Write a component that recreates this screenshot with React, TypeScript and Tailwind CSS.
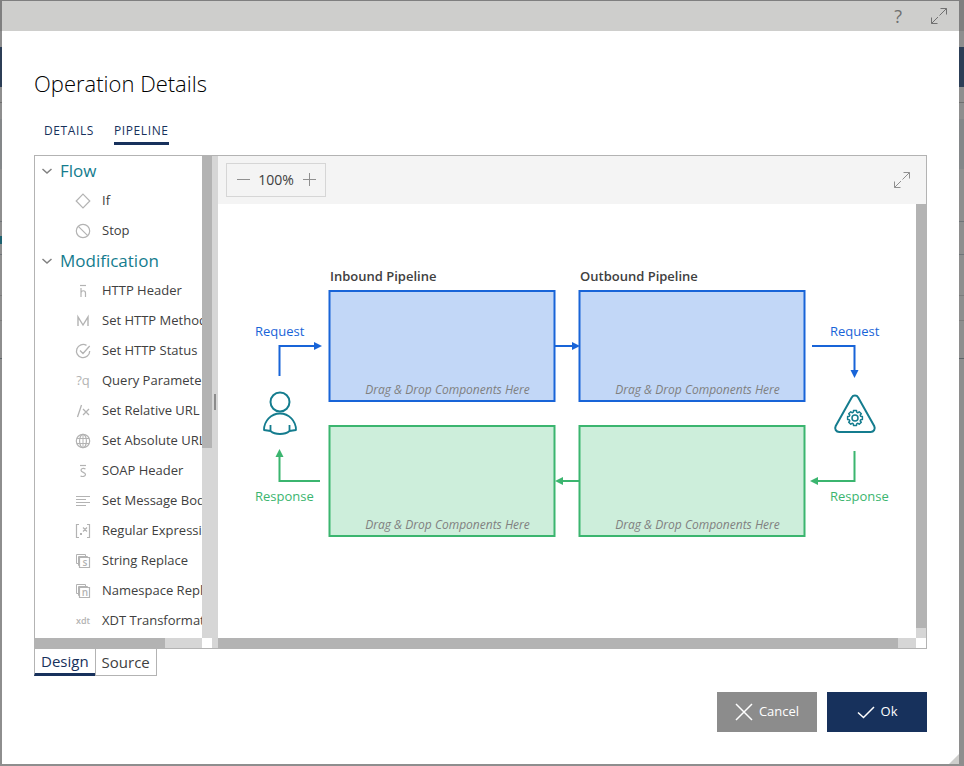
import type { ReactNode } from 'react';
import { useState } from 'react';

type TreeItem = { label: string; icon: ReactNode };
type TreeGroup = { label: string; items: TreeItem[] };

function Glyph({ children }: { children: ReactNode }) {
  return (
    <svg
      width="16"
      height="16"
      viewBox="0 0 16 16"
      fill="none"
      stroke="#b3b3b3"
      aria-hidden="true"
      className="shrink-0"
    >
      {children}
    </svg>
  );
}

function Letters({
  children,
  size = 13,
  y = 12,
  x = 8,
  weight = 400,
}: {
  children: string;
  size?: number;
  y?: number;
  x?: number;
  weight?: number;
}) {
  return (
    <text
      x={x}
      y={y}
      textAnchor="middle"
      fontSize={size}
      fontWeight={weight}
      fill="#b3b3b3"
      stroke="none"
    >
      {children}
    </text>
  );
}

const stacked = (letter: string) => (
  <Glyph>
    <path d="M3.5 10.500h-2v-9h9v2" />
    <path d="M4 12.5h-.5v-9h9V4" />
    <path d="M4.500 4.500h10v10h-10z" strokeWidth="1.2" />
    <Letters size={10} x={10} y={13} weight={600}>
      {letter}
    </Letters>
  </Glyph>
);

const groups: TreeGroup[] = [
  {
    label: 'Flow',
    items: [
      {
        label: 'If',
        icon: (
          <Glyph>
            <path d="M8 1.2 14.8 8 8 14.8 1.2 8z" strokeWidth="1.2" />
          </Glyph>
        ),
      },
      {
        label: 'Stop',
        icon: (
          <Glyph>
            <circle cx="8" cy="8" r="6.7" strokeWidth="1.2" />
            <path d="m3.3 3.3 9.4 9.4" strokeWidth="1.2" />
          </Glyph>
        ),
      },
    ],
  },
  {
    label: 'Modification',
    items: [
      {
        label: 'HTTP Header',
        icon: (
          <Glyph>
            <path d="M5 2.5h6" strokeWidth="1.2" />
            <path d="M6 5v9M6 10c0-3 4.500-3 4.500 0v4" strokeWidth="1.2" />
          </Glyph>
        ),
      },
      {
        label: 'Set HTTP Method',
        icon: (
          <Glyph>
            <path d="M3 13V4l5 8 5-8v9" strokeWidth="1.4" />
          </Glyph>
        ),
      },
      {
        label: 'Set HTTP Status',
        icon: (
          <Glyph>
            <path
              d="M11.5 2.4A6.600 6.600 0 1 0 14.700 8M5 7.500l3 3L14.700 3"
              strokeWidth="1.300"
            />
          </Glyph>
        ),
      },
      {
        label: 'Query Parameters',
        icon: (
          <Glyph>
            <Letters>?q</Letters>
          </Glyph>
        ),
      },
      {
        label: 'Set Relative URL',
        icon: (
          <Glyph>
            <path d="m6.5 2-4 12M8 6l6 6M14 6l-6 6" strokeWidth="1.3" />
          </Glyph>
        ),
      },
      {
        label: 'Set Absolute URL',
        icon: (
          <Glyph>
            <circle cx="8" cy="8" r="6.7" strokeWidth="1.2" />
            <ellipse cx="8" cy="8" rx="3.4" ry="6.7" strokeWidth="1.2" />
            <path d="M8 1.5v13M2 5.5h12M2 10.5h12" />
          </Glyph>
        ),
      },
      {
        label: 'SOAP Header',
        icon: (
          <Glyph>
            <path d="M5 2.5h6" strokeWidth="1.2" />
            <path
              d="M10.5 6C8.5 5 6 5.3 6 7.300c0 2.400 4.500 1.800 4.500 4.200 0 2-3 2.500-5 1.500"
              strokeWidth="1.2"
            />
          </Glyph>
        ),
      },
      {
        label: 'Set Message Body',
        icon: (
          <Glyph>
            <path d="M1 3.5h14M1 6.5h10M1 9.5h14M1 12.5h10" />
          </Glyph>
        ),
      },
      {
        label: 'Regular Expression',
        icon: (
          <Glyph>
            <path d="M4 1.5H1.5v13H4M12 1.5h2.5v13H12M8 4.5l4 4M12 4.5l-4 4" strokeWidth="1.2" />
            <path d="M5 11h2" strokeWidth="2" />
          </Glyph>
        ),
      },
      { label: 'String Replace', icon: stacked('s') },
      { label: 'Namespace Replace', icon: stacked('n') },
      {
        label: 'XDT Transformation',
        icon: (
          <Glyph>
            <Letters size={9} y={11} weight={600}>
              xdt
            </Letters>
          </Glyph>
        ),
      },
    ],
  },
];

function ExpandIcon({ color }: { color: string }) {
  return (
    <svg width="18" height="18" viewBox="0 0 18 18" fill="none" stroke={color}>
      <path d="M10.5 1.5h6v6M16.5 1.5l-7 7M1.5 10.5v6h6M1.5 16.5 8 10" />
    </svg>
  );
}

// The dimmed page that shows around the edges of the dialog
function Backdrop() {
  return (
    <div
      aria-hidden="true"
      className="col-start-1 row-start-1 flex flex-col bg-[#8e8e8e]"
    >
      <div className="h-[31px] bg-[#7f7f7f]" />
      <div className="h-4" />
      <div className="h-10 bg-[#2c3e56]" />
      <div className="h-4 border-b border-[#6f6f6f]" />
      <div className="h-4" />
      <div className="h-[50px] bg-[#848789]" />
      <div className="h-[53px] border-b border-[#6f7478]" />
      <div className="h-3.5" />
      <div className="h-2 w-0.5 bg-[#1d6170]" />
      <div className="h-[11px] border-b border-[#6f7478]" />
      <div className="h-[41px] border-b border-[#7c7c7c]" />
      <div className="h-[25px] border-b border-[#7c7c7c]" />
      <div className="h-[38px] border-b border-[#5c6468]" />
    </div>
  );
}

function ComponentTree() {
  const [closed, setClosed] = useState<string[]>([]);

  const toggle = (label: string) => {
    setClosed((prev) =>
      prev.includes(label) ? prev.filter((l) => l !== label) : [...prev, label],
    );
  };

  return (
    <div className="flex w-[177px] shrink-0 flex-col">
      <div className="flex grow">
        <div className="min-w-0 grow overflow-hidden whitespace-nowrap pb-0.5">
          {groups.map((group) => (
            <div key={group.label}>
              <button
                onClick={() => toggle(group.label)}
                className="flex h-[30px] items-center gap-[7px] pl-1.5 text-[17px] text-[#147c8e]"
              >
                <svg width="12" height="12" viewBox="0 0 12 12" fill="none">
                  <path d="m1.5 4 4.5 4 4.5-4" stroke="#808080" strokeWidth="1.5" />
                </svg>
                {group.label}
              </button>
              {!closed.includes(group.label) && (
                <ul>
                  {group.items.map((item) => (
                    <li
                      key={item.label}
                      className="flex h-[30px] items-center gap-[11px] pl-10 text-[13px] text-[#404040]"
                    >
                      {item.icon}
                      {item.label}
                    </li>
                  ))}
                </ul>
              )}
            </div>
          ))}
        </div>
        <div className="w-2.5 shrink-0 bg-[#d6d6d6]">
          <div className="h-[292px] bg-[#b3b3b3]" />
        </div>
      </div>
      <div className="flex h-2.5">
        <div className="w-[130px] bg-[#b3b3b3]" />
        <div className="grow bg-[#d6d6d6]" />
        <div className="w-2.5 bg-white" />
      </div>
    </div>
  );
}

function DropBox({ x, y, kind }: { x: number; y: number; kind: 'in' | 'out' }) {
  const request = kind === 'in';
  return (
    <g>
      <rect
        x={x}
        y={y}
        width="225"
        height="110"
        fill={request ? '#c2d7f7' : '#cdeedb'}
        stroke={request ? '#1864d8' : '#3bb56f'}
        strokeWidth="2"
      />
      <text x={x + 118} y={y + 103} textAnchor="middle" fontStyle="italic" fontSize="12" fill="#808080">
        Drag &amp; Drop Components Here
      </text>
    </g>
  );
}

function gearPath(cx: number, cy: number) {
  const points: string[] = [];
  const teeth = 8;
  for (let i = 0; i < teeth; i++) {
    [
      [-0.28, 6],
      [-0.2, 7.6],
      [0.2, 7.6],
      [0.28, 6],
    ].forEach(([offset, radius]) => {
      const angle = (i * 2 * Math.PI) / teeth + offset;
      points.push(
        `${(cx + radius * Math.cos(angle)).toFixed(1)} ${(cy + radius * Math.sin(angle)).toFixed(1)}`,
      );
    });
  }
  return `M${points.join('L')}z`;
}

function PipelineDiagram() {
  return (
    <svg width="698" height="434" viewBox="0 0 698 434" fontSize="13" className="shrink-0">
      <text x="112" y="77" fontWeight="600" fill="#404040">
        Inbound Pipeline
      </text>
      <text x="362" y="77" fontWeight="600" fill="#404040">
        Outbound Pipeline
      </text>
      <DropBox x={111.5} y={87} kind="in" />
      <DropBox x={361.5} y={87} kind="in" />
      <DropBox x={111.5} y={222} kind="out" />
      <DropBox x={361.5} y={222} kind="out" />

      <g fill="none" stroke="#1864d8" strokeWidth="2">
        <path d="M61.5 172v-30H97M337 142h18M594 142h42.5v25" />
      </g>
      <g fill="#1864d8">
        <path d="m96 138 8 4-8 4zM354 138l8 4-8 4zM632.5 166h8l-4 8z" />
        <text x="37" y="132">Request</text>
        <text x="612" y="132">Request</text>
      </g>

      <g fill="none" stroke="#3bb56f" strokeWidth="2">
        <path d="M102 277H61.5v-25M361 277h-17M636.5 247v30H600" />
      </g>
      <g fill="#3bb56f">
        <path d="M57.5 253h8l-4-8zM345 273l-8 4 8 4zM600 273l-8 4 8 4z" />
        <text x="37" y="297">Response</text>
        <text x="612" y="297">Response</text>
      </g>

      <g fill="none" stroke="#147c8e" strokeWidth="2" strokeLinejoin="round">
        <circle cx="62" cy="198" r="9.5" />
        <path
          d="M52.5 227v-6M52.5 227l-6.5-1c0-9 7-16.500 16-16.500s16 7.500 16 16.500l-6.500 1v-6M52.5 227c4.500 4 14.500 4 19 0"
          strokeWidth="1.8"
        />
        <path d="M633.7 193.5c1.5-2.6 5-2.6 6.5 0l16 28.5c1.5 3-.5 6-3.500 6h-31.500c-3 0-5-3-3.500-6z" />
        <path d={gearPath(637, 214)} strokeWidth="1.5" />
        <circle cx="637" cy="214" r="3" strokeWidth="1.5" />
      </g>
    </svg>
  );
}

function DesignSurface() {
  const [zoom, setZoom] = useState(100);

  return (
    <div className="flex min-w-0 grow flex-col">
      <div className="flex h-12 items-center justify-between bg-[#f4f4f4] pr-[15px] pl-2">
        <div className="flex h-[34px] w-[100px] items-center justify-between border border-[#d6d6d6] px-2 text-[#404040]">
          <button aria-label="Zoom out" onClick={() => setZoom(zoom - 10)}>
            <svg width="16" height="16" viewBox="0 0 16 16" stroke="#909090">
              <path d="M2 7.5h13" />
            </svg>
          </button>
          <span className="text-sm">{zoom}%</span>
          <button aria-label="Zoom in" onClick={() => setZoom(zoom + 10)}>
            <svg width="16" height="16" viewBox="0 0 16 16" stroke="#909090">
              <path d="M2 7.5h13M8.5 1v13" />
            </svg>
          </button>
        </div>
        <button aria-label="Full screen">
          <ExpandIcon color="#909090" />
        </button>
      </div>
      <div className="flex grow">
        <div className="min-w-0 grow overflow-hidden">
          <PipelineDiagram />
        </div>
        <div className="flex w-2.5 shrink-0 flex-col bg-[#b3b3b3]">
          <div className="mt-auto h-2.5 bg-[#d6d6d6]" />
        </div>
      </div>
      <div className="flex h-2.5">
        <div className="grow bg-[#b3b3b3]" />
        <div className="w-[18px] bg-[#d6d6d6]" />
        <div className="w-2.5 bg-white" />
      </div>
    </div>
  );
}

export default function App() {
  const [tab, setTab] = useState('Pipeline');
  const [view, setView] = useState('Design');

  return (
    <div className="grid min-h-screen font-['Open_Sans','Noto_Sans',sans-serif]">
      <Backdrop />
      <div
        role="dialog"
        aria-labelledby="dialog-title"
        className="relative col-start-1 row-start-1 mt-px mr-[5px] mb-0.5 ml-0.5 flex flex-col bg-white"
      >
        <div className="flex h-[30px] items-center justify-end gap-7 bg-[#cececc] pr-[11px] text-[#707070]">
          <button aria-label="Help" className="text-lg">
            ?
          </button>
          <button aria-label="Maximize">
            <ExpandIcon color="#707070" />
          </button>
        </div>

        <div className="flex grow flex-col px-8">
          <h1
            id="dialog-title"
            className="mt-9 text-[22px] leading-8 font-light text-black"
          >
            Operation Details
          </h1>
          <div role="tablist" className="mt-5 flex gap-5 pl-2.5">
            {['Details', 'Pipeline'].map((name) => (
              <button
                key={name}
                role="tab"
                aria-selected={tab === name}
                onClick={() => setTab(name)}
                className={`h-[26px] border-b-[3px] text-xs tracking-wider text-[#17315c] uppercase ${
                  tab === name ? 'border-[#17315c]' : 'border-transparent'
                }`}
              >
                {name}
              </button>
            ))}
          </div>

          <div className="mt-2.5 flex border border-[#b3b3b3]">
            <ComponentTree />
            <div className="flex w-1.5 shrink-0 cursor-col-resize items-center bg-[#d6d6d6] pl-0.5">
              <div className="h-4 w-0.5 bg-[#8c8c8c]" />
            </div>
            <DesignSurface />
          </div>

          <div className="flex text-[15px] text-[#404040]">
            {['Design', 'Source'].map((name) => (
              <button
                key={name}
                onClick={() => setView(name)}
                className={`h-[27px] px-1.5 ${
                  view === name
                    ? 'border-b-[3px] border-l border-b-[#17315c] border-l-[#b3b3b3] text-[#17315c]'
                    : 'border border-t-0 border-[#b3b3b3]'
                }`}
              >
                {name}
              </button>
            ))}
          </div>

          <div className="mt-4 flex justify-end gap-2.5 text-[13px] text-white">
            <button className="flex h-10 w-[100px] items-center justify-center gap-1.5 bg-[#8c8c8c]">
              <svg width="18" height="18" viewBox="0 0 18 18" stroke="white" strokeWidth="1.5">
                <path d="m1 1 16 16M17 1 1 17" />
              </svg>
              Cancel
            </button>
            <button className="flex h-10 w-[100px] items-center justify-center gap-1.5 bg-[#17315c]">
              <svg width="18" height="18" viewBox="0 0 18 18" fill="none" stroke="white" strokeWidth="1.5">
                <path d="m1 9.5 5.5 5L17 4" />
              </svg>
              Ok
            </button>
          </div>
        </div>

        <svg width="10" height="10" className="absolute right-0 bottom-0">
          <path d="M10 0v10H0z" fill="#cececc" />
        </svg>
      </div>
    </div>
  );
}
